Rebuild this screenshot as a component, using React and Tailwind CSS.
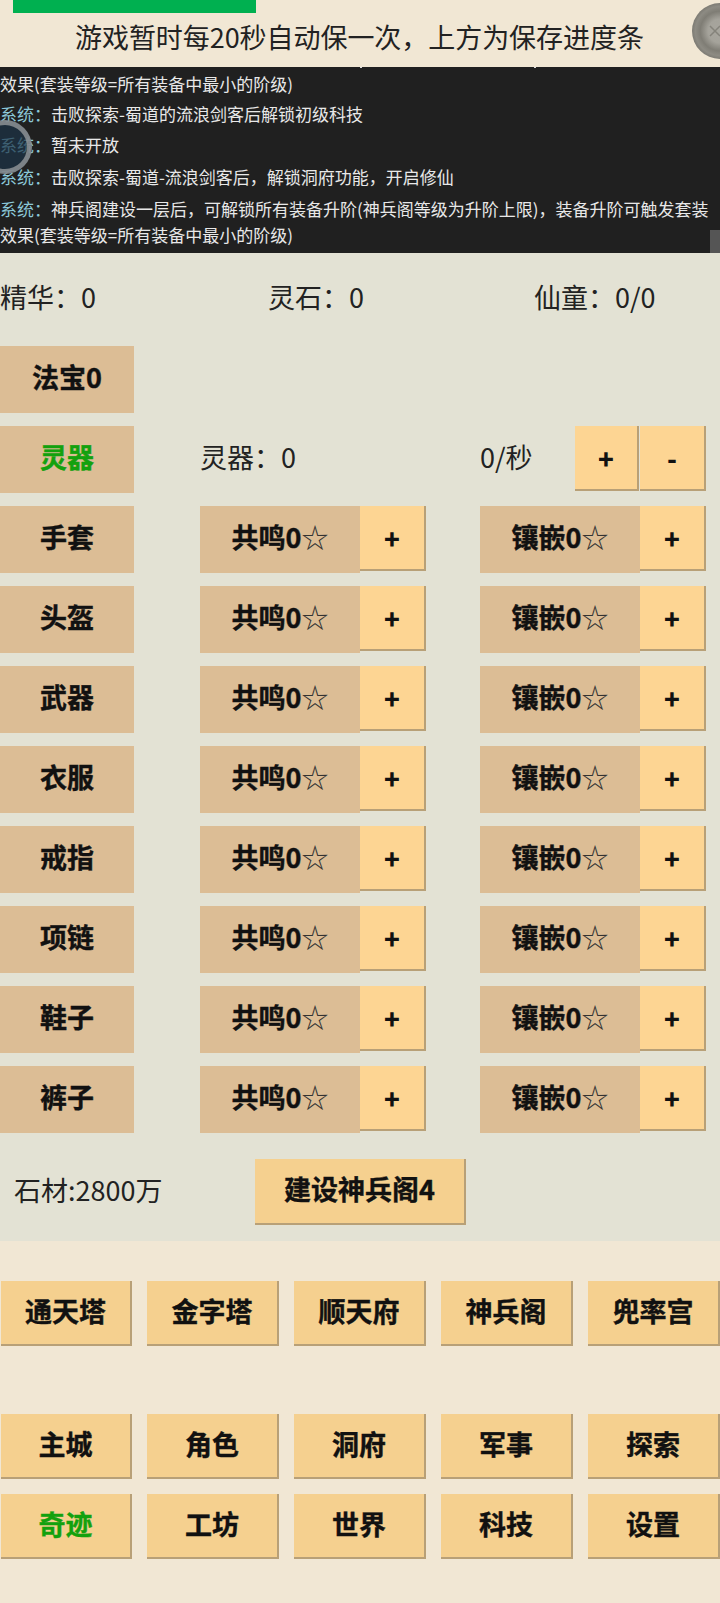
const font = { fontFamily: '"Noto Sans CJK SC", "Noto Sans", sans-serif' };

function Label({ children, className = "", green }) {
  return (
    <div className={`h-[67px] pb-[5px] flex items-center justify-center bg-[#dcbd95] text-[27px] font-bold [-webkit-text-stroke:0.4px] ${green ? "text-[#13a10e]" : "text-[#111]"} ${className}`}>
      {children}
    </div>
  );
}

function Plus({ children = "+", className = "w-[66px]" }) {
  return (
    <div className={`h-[65px] flex items-center justify-center bg-[#fdd593] border-r-2 border-b-2 border-[#b8a077] text-[26px] font-black text-[#111] ${className}`}>
      {children}
    </div>
  );
}

function Nav({ children, green, className = "w-[132px]" }) {
  return (
    <div className={`h-[65px] pb-[3px] flex items-center justify-center bg-[#f5d08f] border-r-2 border-b-2 border-[#b8a077] text-[27px] font-bold [-webkit-text-stroke:0.4px] ${green ? "text-[#13a10e]" : "text-[#111]"} ${className}`}>
      {children}
    </div>
  );
}

function Combo({ text, className = "" }) {
  return (
    <div className={`flex w-[226px] ${className}`}>
      <Label className="w-[160px]">
        {text}
        <span className="font-normal [-webkit-text-stroke:0px] text-[#333]">☆</span>
      </Label>
      <Plus />
    </div>
  );
}

function Sys({ children }) {
  return (
    <div>
      <span className="text-[#8cc8d8]">系统：</span>
      {children}
    </div>
  );
}

const items = ["手套", "头盔", "武器", "衣服", "戒指", "项链", "鞋子", "裤子"];

export default function App() {
  return (
    <div style={font} className="relative w-[720px] h-[1603px] overflow-hidden bg-[#f1e7d4] text-[#222]">
      <div className="h-[67px] flex flex-col">
        <div className="ml-[13px] w-[243px] h-[13px] bg-[#00b050]" />
        <div className="mt-[4px] ml-[75px] text-[27px] tracking-[-0.05px] leading-[40px] whitespace-nowrap">游戏暂时每20秒自动保一次，上方为保存进度条</div>
      </div>

      <div className="relative h-[186px] bg-[#202020] text-[#e8e8e8] text-[17px] leading-[26px] overflow-hidden pt-[4px]">
        <div className="mb-[4px]">效果(套装等级=所有装备中最小的阶级)</div>
        <div className="mb-[5px]"><span className="text-[#8cc8d8]">系统：</span>击败探索-蜀道的流浪剑客后解锁初级科技</div>
        <div className="mb-[6px]"><span className="text-[#8cc8d8]">系统：</span>暂未开放</div>
        <div className="mb-[5.5px]"><span className="text-[#8cc8d8]">系统：</span>击败探索-蜀道-流浪剑客后，解锁洞府功能，开启修仙</div>
        <Sys>神兵阁建设一层后，可解锁所有装备升阶(神兵阁等级为升阶上限)，装备升阶可触发套装效果(套装等级=所有装备中最小的阶级)</Sys>
        <div className="absolute right-0 bottom-0 w-[10px] h-[23px] bg-[#555]" />
        <div className="absolute left-[360px] top-0 w-[2px] h-[1px] bg-[#ddd]" />
        <div className="absolute left-[534px] top-0 w-[2px] h-[1px] bg-[#ddd]" />
      </div>

      <div className="h-[988px] bg-[#e3e2d4]">
        <div className="h-[93px] pb-[4px] flex items-center text-[27px]">
          <div className="w-[268px]">精华：0</div>
          <div className="w-[266px]">灵石：0</div>
          <div>仙童：0/0</div>
        </div>

        <Label className="w-[134px]">法宝0</Label>

        <div className="flex mt-[13px] items-start">
          <Label green className="w-[134px]">灵器</Label>
          <div className="w-[346px] pl-[66px] h-[67px] pb-[5px] flex items-center text-[27px]">灵器：0</div>
          <div className="w-[95px] h-[67px] pb-[5px] flex items-center text-[27px]">0/秒</div>
          <Plus className="w-[64px] mr-[1px]" />
          <Plus className="w-[66px]">-</Plus>
        </div>

        {items.map((name) => (
          <div key={name} className="flex mt-[13px] items-start">
            <Label className="w-[134px]">{name}</Label>
            <Combo text="共鸣0" className="ml-[66px]" />
            <Combo text="镶嵌0" className="ml-[54px]" />
          </div>
        ))}

        <div className="flex items-center mt-[26px]">
          <div className="w-[255px] pl-[14px] pb-[4px] text-[27px]">石材:2800万</div>
          <div className="w-[211px] h-[66px] pb-[4px] flex items-center justify-center bg-[#f5d08f] border-r-2 border-b-2 border-[#b8a077] text-[27px] font-bold [-webkit-text-stroke:0.4px] text-[#111]">建设神兵阁4</div>
        </div>
      </div>

      <div className="flex gap-[15px] mt-[40px]">
        {["通天塔", "金字塔", "顺天府", "神兵阁", "兜率宫"].map((t, i) => <Nav key={t} className={i === 0 ? "ml-[1px] w-[131px]" : "w-[132px]"}>{t}</Nav>)}
      </div>
      <div className="flex gap-[15px] mt-[68px]">
        {["主城", "角色", "洞府", "军事", "探索"].map((t, i) => <Nav key={t} className={i === 0 ? "ml-[1px] w-[131px]" : "w-[132px]"}>{t}</Nav>)}
      </div>
      <div className="flex gap-[15px] mt-[15px]">
        <Nav green className="ml-[1px] w-[131px]">奇迹</Nav>
        {["工坊", "世界", "科技", "设置"].map((t) => <Nav key={t}>{t}</Nav>)}
      </div>

      <div className="absolute left-[-22px] top-[120px] w-[54px] h-[54px] rounded-full bg-[#1d3347]/70 border-[5px] border-[#93979a]/80" />
      <div className="absolute left-[692px] top-[3px] w-[56px] h-[56px] rounded-full flex items-center justify-center bg-[radial-gradient(circle,#a8a69e_0%,#a5a39b_30%,#7f7d75_50%,#8d8b83_62%,#6f6d66_78%,#55534d_100%)]">
        <svg width="14" height="14" viewBox="0 0 14 14" className="-ml-[10px]" stroke="#85837b" strokeWidth="1.5" fill="none"><path d="M2 2l10 10M12 2L2 12" /></svg>
      </div>
    </div>
  );
}
